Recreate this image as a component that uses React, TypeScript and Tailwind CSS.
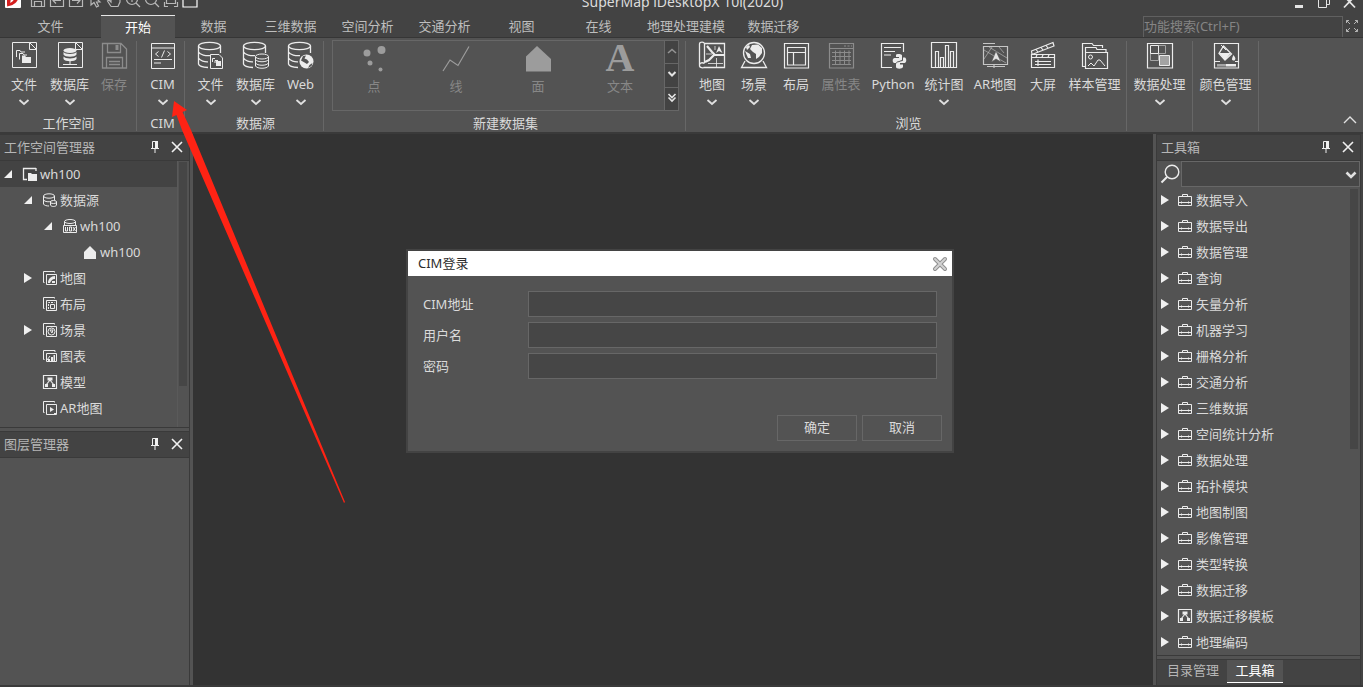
import type { ReactNode } from "react";

type IconProps = { children: ReactNode; className?: string };

function Big({ children, className = "text-[#ececec]" }: IconProps) {
  return (
    <svg viewBox="0 0 28 28" className={`h-7 w-7 shrink-0 ${className}`} fill="none" stroke="currentColor" aria-hidden="true">
      {children}
    </svg>
  );
}

function Small({ children, className = "text-[#ececec]" }: IconProps) {
  return (
    <svg viewBox="0 0 16 16" className={`h-4 w-4 shrink-0 ${className}`} fill="none" stroke="currentColor" aria-hidden="true">
      {children}
    </svg>
  );
}

const page = "M2.5 1.5H19.5L26.5 8.5V26.5H2.5ZM19.5 1.5V8.5H26.5V1.5Z";
const cylinder = (
  <>
    <ellipse cx="12.5" cy="5" rx="11" ry="3.7" strokeWidth="1.3" />
    <path d="M1.5 5V23C2 25 6 26.3 11 26.5M23.5 5V12M1.5 11C3 14 9 15 13 14.6M1.5 17C3 20 8 21 11 20.8" strokeWidth="1.3" />
  </>
);

const icons = {
  file: (
    <Big>
      <path d={page} />
      <path d="M6.5 16V9.5H10L11 11H15M9.5 18.5V12.5H13L14 14H17" />
      <path d="M12 14.5H15L16 16H21V22H12Z" fill="currentColor" stroke="none" />
    </Big>
  ),
  database: (
    <Big>
      <path d={page} />
      <g fill="currentColor" stroke="none">
        <ellipse cx="14" cy="9.5" rx="6.5" ry="2.5" />
        <path d="M7.500 11C9 13.500 19 13.500 20.500 11V13.500C19 16.500 9 16.500 7.500 13.500ZM7.500 15.500C9 18 19 18 20.500 15.500V18C19 21 9 21 7.500 18Z" />
      </g>
      <path d="M14 20V23M7 23.500H21" />
    </Big>
  ),
  save: (
    <Big className="text-[#8c8c8c]">
      <path d="M2.500 2.500H21L26.500 8V27H2.500ZM7.500 2.500V11.500H20.500V2.500M6.500 27V16.500H22.500V27M9 20.500H20M9 23.500H20" strokeWidth="1.300" />
      <path d="M15.500 4H18.500V9H15.500Z" fill="currentColor" stroke="none" />
    </Big>
  ),
  cim: (
    <Big>
      <path d="M2.500 2.500H25.500V27.500H2.500ZM2.500 7H25.500M9.500 10.500L6.500 13L9.500 15.500M18.500 10.500L21.500 13L18.500 15.500M15.500 9.500L12.500 16.500M5 18.500H23M5 22H12" />
    </Big>
  ),
  dbFile: (
    <Big>
      {cylinder}
      <path d="M13.500 13.500H22L25.500 17V27.500H13.500Z" />
      <path d="M15.500 21V17.500H18M18 22V19.500H21" />
      <path d="M19 20H24V25H19Z" fill="currentColor" stroke="none" />
    </Big>
  ),
  dbStack: (
    <Big>
      {cylinder}
      <ellipse cx="20" cy="15.500" rx="6.500" ry="2.500" />
      <path d="M13.500 15.500V25C15 28 25 28 26.500 25V15.500M13.500 18.500C15 21.500 25 21.500 26.500 18.500M13.500 22C15 25 25 25 26.500 22" />
    </Big>
  ),
  web: (
    <Big>
      {cylinder}
      <circle cx="19.500" cy="20.500" r="7" fill="currentColor" stroke="none" />
      <path d="M16 15L19 14.500L17.500 17.500L20 18.500L22 21L20 23L17.500 21.500L14 19.500ZM21 27L22.500 24L25.500 22L24.500 25Z" fill="#535353" stroke="none" />
    </Big>
  ),
  map: (
    <Big>
      <path d="M7 2.500H26.500V26.500H5.500M1.500 24V3C1.500 .5 6.500 .5 6.500 3V22M6.500 22.500C3 20.500 1 23 1.500 25C2 27 5 27 6.500 26.500" strokeWidth="1.300" />
      <path d="M9 5L14 11L17 14H26M16 14L11 19L7 21" strokeWidth="2.200" />
      <path d="M18.500 17V26M10 22.500H25M8 13H14M17 5V9" strokeWidth=".8" />
      <path d="M21 5L24.500 12L21 10L18 12Z" fill="currentColor" stroke="none" />
    </Big>
  ),
  scene: (
    <Big>
      <circle cx="14" cy="12" r="10.500" strokeWidth="1.300" />
      <path d="M5 20L1.500 26.500H26.500L23 20" strokeWidth="1.300" />
      <path d="M12 4L18 3.500L22 7L22 12L19 16L16 18V13L13 11L10 8ZM5 10L10 13L11 17L8 17ZM6 6L9 4L10 6L7 9Z" fill="currentColor" stroke="none" />
    </Big>
  ),
  layout: (
    <Big>
      <path d="M2.500 2.500H26.500V27H2.500ZM5.500 6.500H23.500V24H5.500ZM5.500 11.500H23.500M11.500 11.500V24" strokeWidth="1.200" />
    </Big>
  ),
  table: (
    <Big className="text-[#8c8c8c]">
      <path d="M2.500 2.500H26.500V27H2.500ZM2.500 7.500H26.500M17 5H19M20.500 5H22.500M24 5H25" strokeWidth="1.200" />
      <path d="M5 11.500H24M5 15.500H24M5 19.500H24M5 23.500H24M8.500 9.500V24M13 9.500V24M17.500 9.500V24M22 9.500V24" />
    </Big>
  ),
  python: (
    <Big>
      <path d="M24.500 11V2.500H2.500V26.500H13M5 6.500H22M5 10.500H16M5 14H12" strokeWidth="1.200" />
      <g fill="currentColor" stroke="none">
        <path d="M17 14C17 12.500 23 12.500 23 14.500V18.500C23 20 18 19.500 17 22H15C13 21 13.500 17 15.500 17H20V16H17Z" />
        <path d="M24 16.500H26C28 18 27.500 22 25.500 22H21V23.500H24V26C23 28.500 17 28 17 26V23C17.500 20.500 23 21 24 19.500Z" />
      </g>
    </Big>
  ),
  chart: (
    <Big>
      <path d="M1.500 1.500H26.500V26.500H1.500ZM5.500 26V10.500H8.500V26M10.500 26V16.500H13.500V26M15.500 26V4.500H18.500V26M20.500 26V10.500H23.500V26" strokeWidth="1.200" />
    </Big>
  ),
  ar: (
    <Big className="text-[#c6c6c6]">
      <path d="M2.500 5.500H26.500V23.500H2.500ZM2 2.500H14M6 25.500H24M13 27V24" strokeWidth="1.200" />
      <path d="M3 18L11 6M8 6L26 17M3 9L25 22M18 6L23 12" strokeWidth=".6" />
      <path d="M15 10L20 21L15 18L10.500 21Z" fill="#e4e4e4" stroke="#535353" strokeWidth=".6" />
    </Big>
  ),
  screen: (
    <Big>
      <path d="M2.500 13.500H25.500V26.500H2.500ZM2.500 10L24 1.500L25 5L3 13.500ZM2.500 16.500H25.500M7 8.500L9 11M12 6.500L14 9M17 4.500L19 7M8 14L7 16M14 14L13 16M20 14L19 16M6 20.500H22M6 23.500H22M9 18.500V25" strokeWidth="1.200" />
    </Big>
  ),
  sample: (
    <Big>
      <path d="M4 25V25.500H1.500V2.500H11L12.500 4.500H21.500V7M4.500 25V6.500H15L16 8.500H25V11M4.500 11.500H26.500V27.500H4.500Z" strokeWidth="1.200" />
      <circle cx="9.500" cy="16" r="2" />
      <path d="M7 25L10 22L13 25L17 19L19 19L24 25" />
    </Big>
  ),
  process: (
    <Big>
      <path d="M1.500 2.500H26.500V27H1.500Z" strokeWidth="1.200" />
      <path d="M12.500 4.500H19.500V12.500H12.500ZM4.500 12.500H12.500V19.500H4.500Z" stroke="#a4a4a4" />
      <path d="M4.500 4.500H12.500V12.500H4.500Z" />
      <path d="M13.500 14.500H23.500V24.500H13.500Z" fill="#a4a4a4" />
    </Big>
  ),
  color: (
    <Big>
      <path d="M2.500 2.500H26.500V27H2.500Z" strokeWidth="1.200" />
      <path d="M2.500 20.500H8M23 20.500H26M9 4L14 9" />
      <path d="M11.500 5L19.500 13L13 19L7 12.500Z" strokeWidth="1.300" />
      <path d="M7 12H19L13 19ZM21.500 14C23 16 24 17.500 23 19C22 20 20.500 19.500 20 18.500C20 17 20.500 16 21.500 14Z" fill="currentColor" stroke="none" />
      <path d="M5 23H14V25.500H5Z" fill="#a4a4a4" stroke="none" />
      <path d="M14 23H24V25.500H14Z" fill="currentColor" stroke="none" />
    </Big>
  ),
};

function Chevron() {
  return (
    <svg viewBox="0 0 12 12" className="h-3 w-3 text-[#e0e0e0]" fill="none" stroke="currentColor" strokeWidth="1.8" aria-hidden="true">
      <path d="M1.500 4L6 8L10.500 4" />
    </svg>
  );
}

type ToolProps = { label: string; icon: ReactNode; width: string; menu?: boolean; disabled?: boolean };

function Tool({ label, icon, width, menu, disabled }: ToolProps) {
  return (
    <button disabled={disabled} className={`flex shrink-0 flex-col items-center whitespace-nowrap ${width} ${disabled ? "text-[#878787]" : "text-[#dadada]"}`}>
      {icon}
      <span className="mt-[5px] leading-5">{label}</span>
      {menu && <span className="mt-0.5"><Chevron /></span>}
    </button>
  );
}

function Group({ title, children, className = "" }: { title: string; children: ReactNode; className?: string }) {
  return (
    <section className={`flex h-[90px] shrink-0 flex-col border-r border-[#676767] ${className}`}>
      <div className="flex h-[74px] shrink-0 items-start">{children}</div>
      <h2 className="text-center leading-4 text-[#dadada]">{title}</h2>
    </section>
  );
}

const quickIcons = [
  "M1.500 2V13.500H14.500V2M4.500 13V8.500H11.500V13",
  "M1.500 1V13.500H14.500V1M12 7.500H4M7 4.500L4 7.500L7 10.500M1 4H5",
  "M1.500 1V13.500H14.500V1M4 7.500H12M9 4.500L12 7.500L9 10.500",
  "M4 0V12L7 9.500L9.500 14L11.500 13L9.500 9H13Z",
  "M5 13.500L1.500 8L3 7L5 9V2M5 8V1M8 7V0M11 7V1M14 3V9L12 13.500H5",
  "M12.500 6A5.500 5.500 0 1 1 1.500 6A5.500 5.500 0 1 1 12.500 6M11 10L15 14M4 6H10M7 3V9",
  "M12.500 6A5.500 5.500 0 1 1 1.500 6A5.500 5.500 0 1 1 12.500 6M11 10L15 14M4 6H10",
  "M3.500 0V10.500H12.500V0M1.500 9V13.500H5M11 13.500H14.500V9",
];

const tabs: { label: string; width: string; active?: boolean }[] = [
  { label: "文件", width: "w-[101px]" },
  { label: "开始", width: "w-[74px]", active: true },
  { label: "数据", width: "w-[77px]" },
  { label: "三维数据", width: "w-[77px]" },
  { label: "空间分析", width: "w-[77px]" },
  { label: "交通分析", width: "w-[77px]" },
  { label: "视图", width: "w-[77px]" },
  { label: "在线", width: "w-[77px]" },
  { label: "地理处理建模", width: "w-[98px]" },
  { label: "数据迁移", width: "w-[77px]" },
];

function TitleBar() {
  return (
    <header className="flex h-[15px] shrink-0 items-end justify-between overflow-hidden text-[#b8b8b8]">
      <div className="flex flex-1 items-end gap-[3px] pb-1.5 pl-1">
        <svg viewBox="0 0 18 18" className="mr-[5px] h-[18px] w-[18px]" aria-hidden="true">
          <rect x="1" width="16" height="17" rx="1" fill="#fff" />
          <path d="M8 1H13C17 5 14 14 3 15.500L4 12.500C9 12 12 7 10 3H7Z" fill="#d41f1f" />
          <path d="M3 9L7 7L6 13L3 15Z" fill="#d41f1f" />
        </svg>
        {quickIcons.map((d) => (
          <svg key={d} viewBox="0 0 16 16" className="h-4 w-4" fill="none" stroke="currentColor" strokeWidth="1.200" aria-hidden="true">
            <path d={d} />
          </svg>
        ))}
        <svg viewBox="0 0 16 16" className="h-4 w-4" fill="none" stroke="#fff" strokeWidth="1.200" aria-hidden="true">
          <path d="M1 1H15V14H1Z" />
        </svg>
      </div>
      <h1 className="pb-[3px] pl-1 text-sm leading-5 whitespace-nowrap text-[#dcdcdc]">SuperMap iDesktopX 10i(2020)</h1>
      <div className="flex flex-1 items-end justify-end gap-3 pr-1.5 pb-1.5 text-[#e4e4e4]">
        <button aria-label="最小化">
          <svg viewBox="0 0 12 14" className="h-3.5 w-3" aria-hidden="true"><path d="M2 10H10V13H2Z" fill="currentColor" /></svg>
        </button>
        <button aria-label="还原">
          <svg viewBox="0 0 14 14" className="h-3.5 w-3.5" fill="none" stroke="currentColor" aria-hidden="true"><path d="M1.500 3.500H9.500V12.500H1.500ZM4 1.500H12.500V9.500H10" /></svg>
        </button>
        <button aria-label="关闭">
          <svg viewBox="0 0 14 14" className="h-3.5 w-3.5" fill="none" stroke="currentColor" strokeWidth="1.800" aria-hidden="true"><path d="M1 1L12 12.500M12 1L1 12.500" /></svg>
        </button>
      </div>
    </header>
  );
}

function TabBar() {
  return (
    <nav className="flex h-[23px] shrink-0 border-b border-[#363636] text-[#bebebe]">
      {tabs.map((t) => (
        <button
          key={t.label}
          className={`shrink-0 border-t pb-px leading-5 ${t.width} ${t.active ? "-mb-px border-[#e6e6e6] bg-[#535353] text-white" : "border-transparent"}`}
        >
          {t.label}
        </button>
      ))}
      <div className="ml-auto flex">
        <input
          type="search"
          aria-label="功能搜索"
          placeholder="功能搜索(Ctrl+F)"
          className="mt-px w-[200px] border border-b-0 border-[#606060] bg-[#434343] outline-none placeholder:text-[#858585]"
        />
        <button aria-label="全屏" className="pr-1 pl-0.5">
          <svg viewBox="0 0 14 14" className="h-3.5 w-3.5 text-[#b4b4b4]" fill="none" stroke="currentColor" aria-hidden="true">
            <path d="M4 1.500H1.500V4M1.500 1.500L5 5M10 1.500H12.500V4M12.500 1.500L9 5M4 12.500H1.500V10M1.500 12.500L5 9M10 12.500H12.500V10M12.500 12.500L9 9" />
          </svg>
        </button>
      </div>
    </nav>
  );
}

const shapes = [
  { label: "点", icon: <svg viewBox="0 0 28 28" className="h-7 w-7" fill="#9c9c9c"><circle cx="7" cy="9" r="3.500" /><circle cx="21.500" cy="6" r="4" /><circle cx="10" cy="19" r="2.500" /><circle cx="20.500" cy="25.500" r="2" /></svg> },
  { label: "线", icon: <svg viewBox="0 0 28 28" className="h-7 w-7" fill="none" stroke="#9c9c9c" strokeWidth="1.200"><path d="M1 27L8 16L16 21.500L27 2.500" /></svg> },
  { label: "面", icon: <svg viewBox="0 0 28 28" className="h-7 w-7" fill="#9c9c9c"><path d="M13 2L27 15V27.500H2V12.500Z" /></svg> },
  { label: "文本", icon: <span className="h-7 font-[Liberation_Serif,serif] text-[40px] leading-7 font-bold text-[#9c9c9c]">A</span> },
];

function Ribbon() {
  return (
    <div className="flex h-24 shrink-0 items-start border-b-2 border-[#3a3a3a] bg-[#535353] pt-[3px]">
      <Group title="工作空间" className="pl-px">
        <Tool label="文件" icon={icons.file} width="w-[46px]" menu />
        <Tool label="数据库" icon={icons.database} width="w-[45px]" menu />
        <Tool label="保存" icon={icons.save} width="w-11" disabled />
      </Group>
      <Group title="CIM" className="pl-1">
        <Tool label="CIM" icon={icons.cim} width="w-[43px]" menu />
      </Group>
      <Group title="数据源" className="pl-[3px]">
        <Tool label="文件" icon={icons.dbFile} width="w-[45px]" menu />
        <Tool label="数据库" icon={icons.dbStack} width="w-[45px]" menu />
        <Tool label="Web" icon={icons.web} width="w-[45px]" menu />
      </Group>
      <Group title="新建数据集" className="pr-1.5 pl-2">
        <div className="-mt-px flex h-[71px] border border-[#676767]">
          <div className="flex pr-[3px]">
            {shapes.map((s) => (
              <button key={s.label} disabled className="flex w-[82px] flex-col items-center pt-[3px] text-[#878787]">
                {s.icon}
                <span className="mt-1 leading-5">{s.label}</span>
              </button>
            ))}
          </div>
          <div className="flex w-[14px] flex-col divide-y divide-[#676767] border-l border-[#676767] bg-[#434343] text-[#e4e4e4]">
            <button aria-label="向上" className="flex flex-1 items-center justify-center text-[#949494]">
              <svg viewBox="0 0 12 12" className="h-3 w-3" fill="none" stroke="currentColor" strokeWidth="1.600"><path d="M2 7L6 3.500L10 7" /></svg>
            </button>
            <button aria-label="向下" className="flex flex-1 items-center justify-center">
              <svg viewBox="0 0 12 12" className="h-3 w-3" fill="none" stroke="currentColor" strokeWidth="2"><path d="M2.500 3L6 6.500L9.500 3" /></svg>
            </button>
            <button aria-label="展开" className="flex flex-1 items-center justify-center">
              <svg viewBox="0 0 12 12" className="h-3 w-3" fill="none" stroke="currentColor" strokeWidth="1.600"><path d="M2.500 1L6 4.500L9.500 1M2.500 4.500L6 8L9.500 4.500" /></svg>
            </button>
          </div>
        </div>
      </Group>
      <Group title="浏览" className="pl-[5px]">
        <Tool label="地图" icon={icons.map} width="w-[42px]" menu />
        <Tool label="场景" icon={icons.scene} width="w-[42px]" menu />
        <Tool label="布局" icon={icons.layout} width="w-[42px]" />
        <Tool label="属性表" icon={icons.table} width="w-12" disabled />
        <Tool label="Python" icon={icons.python} width="w-14" />
        <Tool label="统计图" icon={icons.chart} width="w-[46px]" menu />
        <Tool label="AR地图" icon={icons.ar} width="w-14" />
        <Tool label="大屏" icon={icons.screen} width="w-10" />
        <Tool label="样本管理" icon={icons.sample} width="w-[63px]" />
      </Group>
      <Group title="">
        <Tool label="数据处理" icon={icons.process} width="w-[65px]" menu />
      </Group>
      <Group title="">
        <Tool label="颜色管理" icon={icons.color} width="w-[65px]" menu />
      </Group>
      <button aria-label="折叠功能区" className="mr-[5px] mb-1 ml-auto self-end">
        <svg viewBox="0 0 16 16" className="h-4 w-4 text-[#e0e0e0]" fill="none" stroke="currentColor" strokeWidth="1.400"><path d="M2 11L8 5L14 11" /></svg>
      </button>
    </div>
  );
}

function PanelHeader({ title }: { title: string }) {
  return (
    <div className="flex h-[27px] shrink-0 items-center border-y border-[#3a3a3a] bg-[#434343] pr-[5px] pb-0.5 pl-1">
      <h2 className="flex-1 leading-5 text-[#b6b6b6]">{title}</h2>
      <button aria-label="固定" className="mr-2.5">
        <svg viewBox="0 0 10 14" className="h-3.5 w-2.5" fill="none" stroke="#f0f0f0" aria-hidden="true"><path d="M2.500 1.500H6.500V8M2.500 1.500V8M1 8.500H9M5 9V13" /><path d="M5 1H8V8H5Z" fill="#f0f0f0" stroke="none" /></svg>
      </button>
      <button aria-label="关闭">
        <svg viewBox="0 0 14 14" className="h-3.5 w-3.5" fill="none" stroke="#f0f0f0" strokeWidth="1.600" aria-hidden="true"><path d="M2 2L12 12M12 2L2 12" /></svg>
      </button>
    </div>
  );
}

function Arrow({ state }: { state?: "open" | "closed" }) {
  return (
    <svg viewBox="0 0 12 12" className="h-3 w-3 shrink-0" fill="#f0f0f0" aria-hidden="true">
      {state === "open" && <path d="M10 2V10H2Z" />}
      {state === "closed" && <path d="M2 1L10 6L2 11Z" />}
    </svg>
  );
}

const stacked = "M4.500 4.500H14.500V14.500H4.500ZM2.500 12.500H1.500V1.500H12.500V2.500";
const modelIcon = (
  <Small>
    <path d="M1.500 1.500H14.500V14.500H1.500ZM8 6L4 11M8 6L12 11" strokeWidth="1.200" />
    <path d="M5.500 3.500H10.500V6.500H5.500ZM3 10H6V13H3ZM10 10H13V13H10Z" fill="currentColor" stroke="none" />
  </Small>
);

const workspace: { label: string; indent: string; state?: "open" | "closed"; selected?: boolean; icon: ReactNode }[] = [
  { label: "wh100", indent: "pl-0.5", state: "open", selected: true, icon: <Small><path d="M5 13.500H1.500V2.500H14M14 2V5" strokeWidth="1.300" /><path d="M6 7H9L10 8H15V15H6Z" fill="currentColor" stroke="none" /></Small> },
  { label: "数据源", indent: "pl-[22px]", state: "open", icon: <Small><ellipse cx="7" cy="4" rx="5.500" ry="2.200" /><path d="M1.500 4V12C2 13.500 5 14 7 14M12.500 4V8M1.500 8C3 10 7 10 9 9.500" /><ellipse cx="11.500" cy="10" rx="3.200" ry="1.500" /><path d="M8.500 10V13C9 15 14 15 14.500 13V10" /></Small> },
  { label: "wh100", indent: "pl-[42px]", state: "open", icon: <Small><ellipse cx="8" cy="3.500" rx="5.500" ry="2" /><path d="M2.500 3.500V7M13.500 3.500V7M1.500 14.500V7.500H14.500V14.500ZM3.500 9V13H5.500V9M7.500 9V13H9.500V9ZM11 9L13.500 13M13.500 9L11 13" /></Small> },
  { label: "wh100", indent: "pl-[62px]", icon: <Small><path d="M8 2L14 8V15H2V8Z" fill="currentColor" stroke="none" /></Small> },
  { label: "地图", indent: "pl-[22px]", state: "closed", icon: <Small><path d={stacked} /><path d="M6 13C6 9 9 6 13 6V9C10 9 9 11 8 13ZM10 13V11H13V13Z" fill="currentColor" stroke="none" /></Small> },
  { label: "布局", indent: "pl-[22px]", icon: <Small><path d={stacked} /><path d="M6.500 13V6.500H12.500" strokeDasharray="2 1" /><path d="M8.500 8.500H12.500V12.500H8.500Z" /></Small> },
  { label: "场景", indent: "pl-[22px]", state: "closed", icon: <Small><path d={stacked} /><circle cx="9.500" cy="9.500" r="3.500" /><path d="M8 8L10 11L11 8Z" /></Small> },
  { label: "图表", indent: "pl-[22px]", icon: <Small><path d="M4.500 5.500H14.500V13.500H4.500ZM2.500 11.500H1.500V2.500H13V4M5 12L8 8" /><path d="M6 13V11H8V13ZM9 13V9H11V13ZM11.500 13V7H13V13Z" fill="currentColor" stroke="none" /></Small> },
  { label: "模型", indent: "pl-[22px]", icon: modelIcon },
  { label: "AR地图", indent: "pl-[22px]", icon: <Small><path d={stacked} /><path d="M8 7L12 9.500L8 12Z" fill="currentColor" stroke="none" /><path d="M12 13.500H15" /></Small> },
];

const toolboxIcon = (
  <Small>
    <path d="M1.500 4.500H14.500V13.500H1.500ZM5.500 4V2.500H10.500V4M1.500 10.500H14.500M4.500 9.500V11.500M11.500 9.500V11.500" />
  </Small>
);

const toolbox = ["数据导入", "数据导出", "数据管理", "查询", "矢量分析", "机器学习", "栅格分析", "交通分析", "三维数据", "空间统计分析", "数据处理", "拓扑模块", "地图制图", "影像管理", "类型转换", "数据迁移", "数据迁移模板", "地理编码"];

function LeftDock() {
  return (
    <aside className="flex w-[190px] shrink-0 flex-col border-r border-[#3a3a3a]">
      <PanelHeader title="工作空间管理器" />
      <div className="flex h-[267px] shrink-0 border-b border-[#3a3a3a]">
        <ul className="flex-1">
          {workspace.map((n, i) => (
            <li key={i}>
              <button className={`flex h-[26px] w-full items-center text-[#dadada] ${n.indent} ${n.selected ? "bg-[#434343]" : ""}`}>
                <Arrow state={n.state} />
                <span className="ml-2">{n.icon}</span>
                <span className="ml-0.5 pb-px leading-5">{n.label}</span>
              </button>
            </li>
          ))}
        </ul>
        <div className="w-3 border-l border-[#5a5a5a] pt-px">
          <div className="ml-px h-56 w-2 bg-[#464646]" />
        </div>
      </div>
      <div className="mt-[3px]">
        <PanelHeader title="图层管理器" />
      </div>
    </aside>
  );
}

function RightDock() {
  return (
    <aside className="flex w-[205px] shrink-0 flex-col border-x border-[#3a3a3a]">
      <PanelHeader title="工具箱" />
      <div className="flex h-[26px] shrink-0 items-center">
        <svg viewBox="0 0 20 20" className="mr-px ml-[3px] h-5 w-5 shrink-0" fill="none" stroke="#ececec" strokeWidth="1.400" aria-hidden="true">
          <circle cx="12" cy="8" r="6.800" />
          <path d="M7 13L1.500 18.500" strokeWidth="2" />
        </svg>
        <div className="relative h-full min-w-0 flex-1">
          <select aria-label="搜索工具" className="h-full w-full appearance-none border border-[#676767] bg-[#464646] outline-none">
            <option></option>
          </select>
          <svg viewBox="0 0 12 12" className="pointer-events-none absolute top-2 right-[3px] h-3 w-3" fill="none" stroke="#e0e0e0" strokeWidth="2.600" aria-hidden="true"><path d="M1.500 3.500L6 8L10.500 3.500" /></svg>
        </div>
      </div>
      <div className="flex min-h-0 flex-1 border-b border-[#3a3a3a]">
        <ul className="flex-1 overflow-hidden">
          {toolbox.map((label) => (
            <li key={label}>
              <button className="flex h-[26px] w-full items-center pl-0.5 text-[#dadada]">
                <Arrow state="closed" />
                <span className="ml-1.5">{label === "数据迁移模板" ? modelIcon : toolboxIcon}</span>
                <span className="ml-[3px] pb-px leading-5">{label}</span>
              </button>
            </li>
          ))}
        </ul>
        <div className="w-[10px] pt-0.5">
          <div className="h-[260px] w-2 bg-[#464646]" />
        </div>
      </div>
      <div className="mt-[3px] flex h-[26px] shrink-0 border-t border-[#3a3a3a] bg-[#434343]">
        <button className="w-[70px] pb-1 pl-0.5 text-[#b6b6b6]">目录管理</button>
        <button className="mb-0.5 w-14 border-b border-white bg-[#535353] pb-px text-white">工具箱</button>
      </div>
    </aside>
  );
}

const fields = [
  { id: "cim-address", label: "CIM地址", type: "text" },
  { id: "cim-user", label: "用户名", type: "text" },
  { id: "cim-password", label: "密码", type: "password" },
];

function LoginDialog() {
  return (
    <div role="dialog" aria-labelledby="login-title" className="absolute top-[249px] left-[406px] w-[548px] border-2 border-[#434343] bg-[#535353]">
      <div className="flex h-[25px] items-center justify-between bg-white pr-1 pl-2.5">
        <h2 id="login-title" className="pb-0.5 leading-5 text-[#2c2c2c]">CIM登录</h2>
        <button aria-label="关闭">
          <svg viewBox="0 0 16 16" className="h-4 w-4" fill="none" strokeLinecap="round" aria-hidden="true">
            <path d="M3 3L13 13M13 3L3 13" stroke="#8e8e8e" strokeWidth="4" />
            <path d="M3 3L13 13M13 3L3 13" stroke="#d2d2d2" strokeWidth="2" />
          </svg>
        </button>
      </div>
      <form className="text-[#dadada]" onSubmit={(e) => e.preventDefault()}>
        <div className="flex flex-col gap-[5px] p-[15px]">
          {fields.map((f) => (
            <div key={f.id} className="flex items-center">
              <label htmlFor={f.id} className="w-[105px] pb-px leading-5">{f.label}</label>
              <input id={f.id} type={f.type} className="h-[26px] min-w-0 flex-1 border border-[#676767] bg-[#464646] px-1 outline-none" />
            </div>
          ))}
        </div>
        <div className="flex justify-end gap-[5px] px-2.5 pt-[21px] pb-2.5">
          <button type="submit" className="h-[26px] w-20 border border-[#676767]">确定</button>
          <button type="button" className="h-[26px] w-20 border border-[#676767]">取消</button>
        </div>
      </form>
    </div>
  );
}

export default function App() {
  return (
    <div className="relative flex h-screen flex-col overflow-hidden bg-[#434343] font-['Noto_Sans','Noto_Sans_CJK_SC',sans-serif] text-[13px]">
      <TitleBar />
      <TabBar />
      <Ribbon />
      <div className="flex min-h-0 flex-1 border-b-2 border-[#3a3a3a] bg-[#535353]">
        <LeftDock />
        <main className="mx-[3px] flex-1 bg-[#333333]" />
        <RightDock />
        <div className="w-0.5 bg-[#434343]" />
      </div>
      <LoginDialog />
      <svg className="pointer-events-none absolute top-[100px] left-[170px] h-[404px] w-[176px]" viewBox="170 100 176 404" aria-hidden="true">
        <path d="M174 101L187 110L182.500 112L191 130L345 502L344 503L182 130L176.500 115L172 117Z" fill="#ff2314" />
      </svg>
    </div>
  );
}
